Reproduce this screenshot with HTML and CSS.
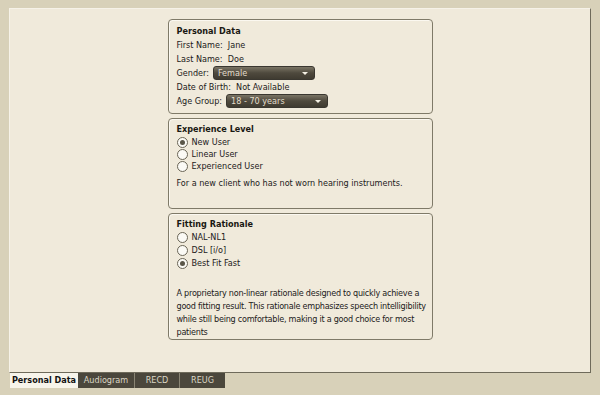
FILE: index.html
```html
<!DOCTYPE html>
<html lang="en">
<head>
<meta charset="UTF-8">
<title>Fitting - Personal Data</title>
<link rel="stylesheet" href="styles.css">
</head>
<body>
    <div class="panel">
        <div class="column">
            <div class="group group-personal">
                <div class="group-title">Personal Data</div>
                <div class="field">First Name:&nbsp; Jane</div>
                <div class="field">Last Name:&nbsp; Doe</div>
                <div class="field">Gender: <span class="select select-gender">Female<span class="arrow"></span></span></div>
                <div class="field">Date of Birth:&nbsp; Not Available</div>
                <div class="field">Age Group: <span class="select select-age">18 - 70 years<span class="arrow"></span></span></div>
            </div>

            <div class="group group-experience">
                <div class="group-title">Experience Level</div>
                <div class="radio checked">New User</div>
                <div class="radio">Linear User</div>
                <div class="radio">Experienced User</div>
                <p class="note">For a new client who has not worn hearing instruments.</p>
            </div>

            <div class="group group-rationale">
                <div class="group-title">Fitting Rationale</div>
                <div class="radio">NAL-NL1</div>
                <div class="radio">DSL [i/o]</div>
                <div class="radio checked">Best Fit Fast</div>
                <p class="note note-long">A proprietary non-linear rationale designed to quickly achieve a good fitting result. This rationale emphasizes speech intelligibility while still being comfortable, making it a good choice for most patients</p>
            </div>
        </div>
    </div>
    <div class="tabs">
        <div class="tab active">Personal Data</div>
        <div class="tab tab-audiogram">Audiogram</div>
        <div class="tab tab-recd">RECD</div>
        <div class="tab tab-reug">REUG</div>
    </div>
</body>
</html>
```

FILE: styles.css
```css
body {
    margin: 0;
    background-color: #d8d1b9;
    font-family: "DejaVu Sans Condensed", "DejaVu Sans", sans-serif;
    font-size: 9px;
    color: #22201a;
}
.panel {
    margin: 8px 9px 0 9px;
    height: 363px;
    background-color: #f0eadb;
    border-top: 1px solid #f6f2e8;
    border-left: 1px solid #f6f2e8;
    border-right: 1px solid #6e6a5a;
    border-bottom: 1px solid #6e6a5a;
    display: flex;
    justify-content: center;
}
.column {
    width: 265px;
    margin-top: 10px;
    display: flex;
    flex-direction: column;
    gap: 4px;
}
.group {
    box-sizing: border-box;
    border: 1px solid #7f7a68;
    border-radius: 4px;
    box-shadow: inset 1px 1px 0 #fbf8f0;
    padding: 4px 1px 0 8px;
}
.group-personal {
    height: 95px;
}
.group-experience {
    height: 91px;
    padding-top: 3px;
}
.group-rationale {
    height: 127px;
    padding-top: 3px;
}
.group-title {
    font-weight: bold;
    line-height: 14px;
    color: #1a1812;
}
.field {
    line-height: 14px;
    height: 14px;
    display: flex;
    align-items: center;
    gap: 4px;
}
.select {
    position: relative;
    display: inline-block;
    box-sizing: border-box;
    width: 102px;
    height: 14px;
    line-height: 13px;
    padding-left: 4px;
    color: #e2dccb;
    border: 1px solid #3a3730;
    border-radius: 3px;
    background: linear-gradient(#7a7464, #4e493d 50%, #3f3b31);
}
.arrow {
    position: absolute;
    right: 6px;
    top: 5px;
    border-left: 3px solid transparent;
    border-right: 3px solid transparent;
    border-top: 3px solid #f4f0e4;
}
.radio {
    position: relative;
    line-height: 12px;
    height: 12px;
    padding-left: 15px;
}
.group-rationale .radio {
    line-height: 13px;
    height: 13px;
}
.radio::before {
    content: "";
    position: absolute;
    left: 0;
    top: 1px;
    width: 9px;
    height: 9px;
    border: 1px solid #6a6556;
    border-radius: 50%;
    background: #fbfaf5;
}
.radio.checked::after {
    content: "";
    position: absolute;
    left: 3px;
    top: 4px;
    width: 5px;
    height: 5px;
    border-radius: 50%;
    background: #5a5648;
}
.note {
    margin: 5px 0 0 0;
    line-height: 13px;
}
.note-long {
    margin-top: 17px;
    letter-spacing: -0.25px;
}
.tabs {
    display: flex;
    margin-left: 10px;
    height: 15px;
}
.tab {
    box-sizing: border-box;
    height: 15px;
    line-height: 15px;
    text-align: center;
    background-color: #4b473c;
    color: #ddd7c6;
    border-right: 1px solid #8a8574;
}
.tab.active {
    width: 68px;
    background-color: #f7f4ea;
    color: #111;
    font-weight: bold;
    border-right: none;
}
.tab-audiogram {
    width: 57px;
}
.tab-recd {
    width: 45px;
}
.tab-reug {
    width: 45px;
    border-right: none;
}
```
